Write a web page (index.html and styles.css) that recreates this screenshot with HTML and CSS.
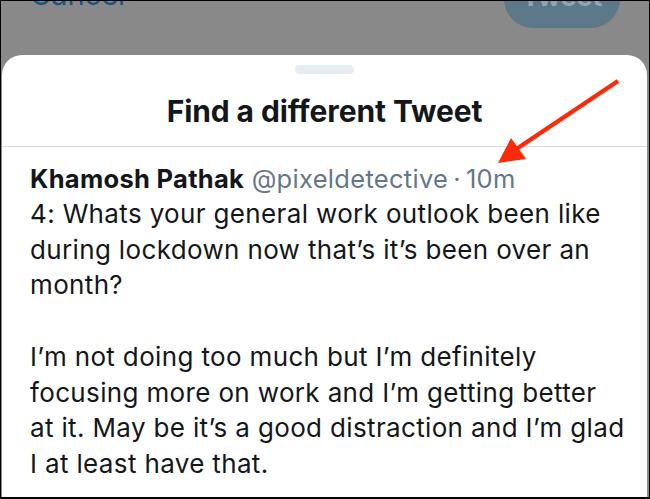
FILE: index.html
```html
<!DOCTYPE html>
<html lang="en">
<head>
<meta charset="utf-8">
<title>Find a different Tweet</title>
<link rel="stylesheet" href="styles.css">
</head>
<body>
<div class="frame">
  <div class="topbar">
    <span class="cancel">Cancel</span>
    <span class="tweet-btn">Tweet</span>
  </div>
  <div class="sheet">
    <div class="handle"></div>
    <h1 class="title">Find a different Tweet</h1>
    <div class="tweet">
      <div class="meta"><span class="name">Khamosh Pathak</span> <span class="handle-name">@pixeldetective</span><span class="dot">·</span><span class="time">10m</span></div>
      <p class="body">4: Whats your general work outlook been like<br>during lockdown now that’s it’s been over an<br>month?</p>
      <p class="body gap">I’m not doing too much but I’m definitely<br>focusing more on work and I’m getting better<br>at it. May be it’s a good distraction and I’m glad<br>I at least have that.</p>
    </div>
  </div>
  <svg class="arrow" width="650" height="499" viewBox="0 0 650 499">
    <line x1="618" y1="81" x2="512" y2="152" stroke="#fb2a08" stroke-width="4.5" stroke-linecap="butt"/>
    <polygon points="498,163 511,138 526,159" fill="#fb2a08"/>
  </svg>
</div>
</body>
</html>
```

FILE: styles.css
```css
html, body {
  margin: 0;
  padding: 0;
  background: #fff;
}

.frame {
  position: relative;
  width: 650px;
  height: 499px;
  box-sizing: border-box;
  border: 1px solid #000;
  border-bottom-width: 2px;
  background: #898989;
  overflow: hidden;
  display: flex;
  flex-direction: column;
  font-family: Inter, Roboto, "Noto Sans", sans-serif;
}

.topbar {
  height: 54px;
  flex: none;
  display: flex;
  justify-content: space-between;
  align-items: flex-start;
  padding: 0 29px 0 29px;
}

.cancel {
  font-size: 29px;
  line-height: 30px;
  margin-top: -21px;
  color: #115883;
}

.tweet-btn {
  width: 116px;
  height: 58px;
  margin-top: -31px;
  border-radius: 29px;
  background: #5d7889;
  color: #92a6b3;
  font-size: 27px;
  font-weight: 700;
  display: flex;
  align-items: flex-end;
  justify-content: center;
  line-height: 36px;
  box-sizing: border-box;
  padding-bottom: 13px;
  overflow: hidden;
}

.sheet {
  flex: 1;
  margin: 0 2px 0 1px;
  background: #fff;
  border-radius: 20px 20px 0 0;
  display: flex;
  flex-direction: column;
  align-items: stretch;
}

.handle {
  align-self: center;
  width: 59px;
  height: 9px;
  margin-top: 10px;
  border-radius: 5px;
  background: #e6ecf0;
}

.title {
  margin: 0;
  height: 73px;
  box-sizing: border-box;
  border-bottom: 1px solid #d3dbe0;
  padding-top: 19px;
  text-align: center;
  font-size: 30px;
  line-height: 36px;
  font-weight: 700;
  color: #14171a;
  letter-spacing: -0.1px;
}

.tweet {
  padding: 16px 10px 0 28px;
  color: #14171a;
}

.meta {
  font-size: 25.5px;
  line-height: 32px;
  white-space: nowrap;
  letter-spacing: 0.3px;
}

.name {
  font-weight: 700;
  color: #14171a;
}

.handle-name,
.time,
.dot {
  color: #657786;
}

.dot {
  margin: 0 5px 0 5px;
}

.body {
  margin: 1px 0 0 0;
  font-size: 26px;
  line-height: 35.7px;
  letter-spacing: 0.35px;
  white-space: nowrap;
}

.body.gap {
  margin-top: 35.7px;
}

.arrow {
  position: absolute;
  left: -1px;
  top: -1px;
  pointer-events: none;
}
```
